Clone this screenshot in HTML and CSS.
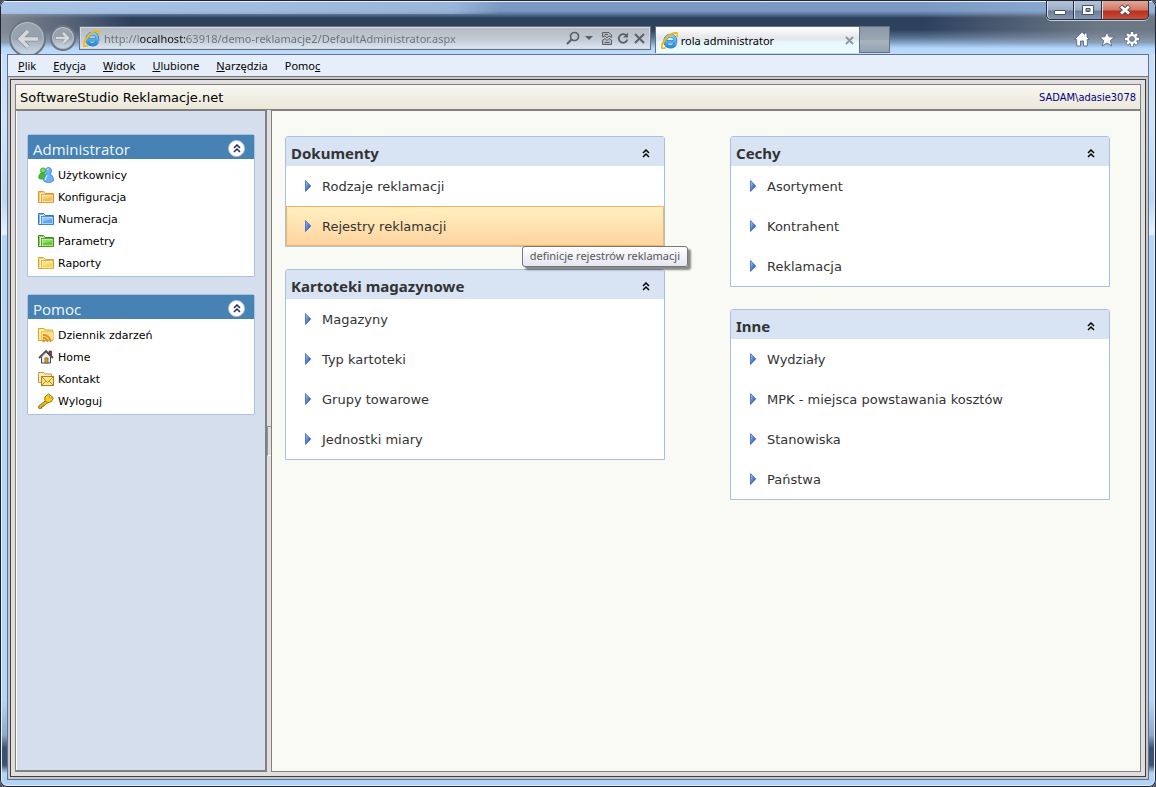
FILE: index.html
```
<!DOCTYPE html>
<html lang="pl">
<head>
	<meta charset="utf-8">
	<meta name="viewport" content="width=device-width, initial-scale=1.0">
	<link rel="stylesheet" href="styles.css">
	<title>rola administrator</title>
</head>
<body>
	<!-- shared icons -->
	<svg class="defs" width="0" height="0">
		<defs>
			<linearGradient id="blueGrad" x1="0" y1="0" x2="1" y2="1">
				<stop offset="0" stop-color="#a8d0fa"/>
				<stop offset="1" stop-color="#0430a8"/>
			</linearGradient>
			<linearGradient id="ieGrad" x1="0" y1="0" x2="0" y2="1">
				<stop offset="0" stop-color="#7cd0f6"/>
				<stop offset="1" stop-color="#2a90d6"/>
			</linearGradient>
		</defs>
		<symbol id="ie" viewBox="0 0 16 16">
			<path d="M4 9.2H13.6C13.8 5.6 11.8 3.4 8.9 3.4C6 3.4 3.8 5.6 3.8 8.6C3.8 11.8 6 13.8 8.9 13.8C11 13.8 12.6 12.8 13.4 11" fill="none" stroke="#2a7cc0" stroke-width="3.400"/>
			<path d="M4 9.2H13.6C13.8 5.6 11.8 3.4 8.9 3.4C6 3.4 3.8 5.6 3.8 8.6C3.8 11.8 6 13.8 8.9 13.8C11 13.8 12.6 12.8 13.4 11" fill="none" stroke="url(#ieGrad)" stroke-width="2.400"/>
			<path d="M14.8 4.6C15.8 2.4 15.6.8 13.8.8C11 .8 6.600 3.600 3.600 7.400C.8 11 -.2 14.200 1.200 15.200C2 15.600 3.200 15.300 4.400 14.600" fill="none" stroke="#f6b80c" stroke-width="1.800"/>
		</symbol>
		<symbol id="chevrons" viewBox="0 0 8 9">
			<path d="M1 4L4 1L7 4M1 8L4 5L7 8" fill="none" stroke="currentColor" stroke-width="1.500"/>
		</symbol>
		<symbol id="arrow" viewBox="0 0 6 12">
			<path d="M.5 .5L5.700 6L.5 11.500Z" fill="url(#blueGrad)" stroke="#2458c4" stroke-width=".7"/>
		</symbol>
		<symbol id="folder" viewBox="0 0 16 16">
			<path d="M.5 13.500V2.500H5.500L7 4.500H15.500V13.500Z" fill="#fff6dc" stroke="currentColor"/>
			<path d="M1.500 12.500V3.500H5L6.500 5.500" fill="none" stroke="var(--fill)" stroke-width=".8"/>
			<rect x="3.500" y="5.500" width="11.500" height="8" fill="#fff" stroke="currentColor" stroke-width=".8"/>
			<rect x="4.500" y="6.500" width="9.500" height="6" fill="var(--fill)"/>
			<path d="M4.500 6.500H14V8L4.500 10.500Z" fill="#fff" opacity=".3"/>
		</symbol>
	</svg>

	<div class="window">
		<header class="titlebar">
			<div class="win-buttons">
				<button class="win-btn" aria-label="Minimalizuj">
					<svg width="14" height="12" viewBox="0 0 14 12"><rect x="1.500" y="6.500" width="11" height="4" rx=".5" fill="#fff" stroke="#4b5262"/></svg>
				</button>
				<button class="win-btn" aria-label="Maksymalizuj">
					<svg width="12" height="12" viewBox="0 0 12 12"><path d="M.5 1.500H11.500V10.500H.5ZM4 4.500V7.500H8V4.500Z" fill="#fff" fill-rule="evenodd" stroke="#4b5262"/></svg>
				</button>
				<button class="win-btn close" aria-label="Zamknij">
					<svg width="14" height="12" viewBox="0 0 14 12"><path d="M2.500 2L11.500 10M11.500 2L2.500 10" stroke="#5b4652" stroke-width="4.500"/><path d="M3 2.400L11 9.600M11 2.400L3 9.600" stroke="#fff" stroke-width="2.700"/></svg>
				</button>
			</div>
			<div class="nav-row">
				<button class="round back" aria-label="Wstecz">
					<svg width="24" height="22" viewBox="0 0 24 22"><path d="M22 11H5M12 3L4 11L12 19" fill="none" stroke="#8a9199" stroke-width="5"/><path d="M22 11H5M12 3L4 11L12 19" fill="none" stroke="#d5dadf" stroke-width="3.400"/></svg>
				</button>
				<button class="round forward" aria-label="Dalej">
					<svg width="16" height="16" viewBox="0 0 16 16"><path d="M1 8H13M8 3L13 8L8 13" fill="none" stroke="#8a9199" stroke-width="4"/><path d="M1 8H13M8 3L13 8L8 13" fill="none" stroke="#d5dadf" stroke-width="2.500"/></svg>
				</button>
				<div class="address">
					<svg width="17" height="17"><use href="#ie"/></svg>
					<input type="text" aria-label="Adres" value="http://localhost:63918/demo-reklamacje2/DefaultAdministrator.aspx">
					<button aria-label="Szukaj"><svg width="14" height="14" viewBox="0 0 14 14"><circle cx="8.500" cy="5.500" r="4" fill="none" stroke="#5d6066" stroke-width="1.700"/><path d="M5.500 8.500L1 13" stroke="#5d6066" stroke-width="2.200"/></svg></button>
					<button aria-label="Lista adresów"><svg width="8" height="4" viewBox="0 0 8 4"><path d="M0 0H8L4 4Z" fill="#5d6066"/></svg></button>
					<button class="compat" aria-label="Widok zgodności"><svg width="10" height="13" viewBox="0 0 10 13"><path d="M.5 5V.5H7L9.500 3V5.500L7 4L5 6L3 4ZM.5 8L3 6.500L5 8.500L7 6.500L9.500 8V12.500H.5Z" fill="#b4b9c0" stroke="#5d6066"/><path d="M2.500 2.500H6M2.500 10.500H7.500" stroke="#5d6066"/></svg></button>
					<button aria-label="Odśwież"><svg width="12" height="13" viewBox="0 0 12 13"><path d="M9 3.200A4.300 4.300 0 1 0 10.300 7.500" fill="none" stroke="#5d6066" stroke-width="1.800"/><path d="M6 5.500H11V.5Z" fill="#5d6066"/></svg></button>
					<button aria-label="Zatrzymaj"><svg width="11" height="11" viewBox="0 0 11 11"><path d="M1 1L10 10M10 1L1 10" stroke="#5d6066" stroke-width="2"/></svg></button>
				</div>
				<div class="tab">
					<svg width="17" height="17"><use href="#ie"/></svg>
					<span>rola administrator</span>
					<button aria-label="Zamknij kartę"><svg width="9" height="9" viewBox="0 0 9 9"><path d="M1 1L8 8M8 1L1 8" stroke="#94979c" stroke-width="2"/></svg></button>
				</div>
				<button class="new-tab" aria-label="Nowa karta"></button>
				<div class="tools">
					<button aria-label="Strona główna"><svg width="16" height="16" viewBox="0 0 16 16"><path d="M8 1L.7 8.500H2.700V15H6.500V10H9.500V15H13.300V8.500H15.300L13 6V2H10.500V3.500Z" fill="#fff" stroke="#5c6980" stroke-width=".9"/></svg></button>
					<button aria-label="Ulubione"><svg width="16" height="16" viewBox="0 0 16 16"><path d="M8 .7L10.100 5.800L15.500 6.100L11.300 9.600L12.700 15L8 12L3.300 15L4.700 9.600L.5 6.100L5.900 5.800Z" fill="#fff" stroke="#5c6980" stroke-width=".9"/></svg></button>
					<button aria-label="Narzędzia"><svg width="16" height="16" viewBox="0 0 16 16"><g stroke="#5c6980" stroke-width="4"><path d="M8 .5V15.500M.5 8H15.500M2.700 2.700L13.300 13.300M13.300 2.700L2.700 13.300"/></g><circle cx="8" cy="8" r="5.700" fill="#5c6980"/><g stroke="#fff" stroke-width="2.400"><path d="M8 1V15M1 8H15M3.100 3.100L12.900 12.900M12.900 3.100L3.100 12.900"/></g><circle cx="8" cy="8" r="4.900" fill="#fff"/><circle cx="8" cy="8" r="2.500" fill="#8190a6" stroke="#5c6980" stroke-width=".7"/></svg></button>
				</div>
			</div>
		</header>

		<div class="client">
			<nav class="menu">
				<button><u>P</u>lik</button>
				<button><u>E</u>dycja</button>
				<button><u>W</u>idok</button>
				<button><u>U</u>lubione</button>
				<button><u>N</u>arzędzia</button>
				<button>Pomo<u>c</u></button>
			</nav>
			<div class="frame">
				<div class="page">
					<div class="page-head">
						<h1>SoftwareStudio Reklamacje.net</h1>
						<span class="user">SADAM\adasie3078</span>
					</div>
					<div class="panes">
						<aside class="sidebar">
							<section class="side-box">
								<div class="side-head">
									<h2>Administrator</h2>
									<button aria-label="Zwiń"><svg width="8" height="9"><use href="#chevrons"/></svg></button>
								</div>
								<ul>
									<li><a href="#"><svg width="16" height="16" viewBox="0 0 16 16"><circle cx="5" cy="3.500" r="2.600" fill="#7ade58" stroke="#2ca028" stroke-width=".8"/><path d="M.7 11C.7 7.500 2.500 5.500 5 5.500C7 5.500 8 7.500 8 12H2Z" fill="#3fbc38" stroke="#2ca028" stroke-width=".8"/><path d="M10.500 .6C8.300 .6 7.200 2.400 7.600 4.500C7.800 5.600 8.200 6.300 8.700 7C6.800 8 5.700 10.500 5.600 13.800C8 16 13 16 15.500 13.800C15.400 10.500 14.200 8 12.300 7C12.800 6.300 13.200 5.600 13.400 4.500C13.800 2.400 12.700 .6 10.500 .6Z" fill="#6ab2fa" stroke="#3c84d8" stroke-width=".9"/><path d="M9.200 3C9.400 2.300 10 2 10.800 2M9.300 8.500C8.300 9.500 7.500 11.200 7.300 13" stroke="#d6ecff" stroke-width="1.200" fill="none"/></svg>Użytkownicy</a></li>
									<li><a href="#"><svg class="orange" width="16" height="16"><use href="#folder"/></svg>Konfiguracja</a></li>
									<li><a href="#"><svg class="blue" width="16" height="16"><use href="#folder"/></svg>Numeracja</a></li>
									<li><a href="#"><svg class="green" width="16" height="16"><use href="#folder"/></svg>Parametry</a></li>
									<li><a href="#"><svg class="yellow" width="16" height="16"><use href="#folder"/></svg>Raporty</a></li>
								</ul>
							</section>
							<section class="side-box">
								<div class="side-head">
									<h2>Pomoc</h2>
									<button aria-label="Zwiń"><svg width="8" height="9"><use href="#chevrons"/></svg></button>
								</div>
								<ul>
									<li><a href="#"><svg width="16" height="16" viewBox="0 0 16 16"><path d="M.5 13.500V1.500H6L7 3H14.500V13.500Z" fill="#fbeaa8" stroke="#d8a428"/><path d="M3.500 13V4.500H15.500V13Z" fill="#fce28a" stroke="#e8bc48" stroke-width=".7"/><path d="M5 8A7 7 0 0 1 12.500 15M5 11A4 4 0 0 1 9.500 15" fill="none" stroke="#e08a24" stroke-width="1.800"/><circle cx="5.800" cy="14" r="1.200" fill="#e08a24"/></svg>Dziennik zdarzeń</a></li>
									<li><a href="#"><svg width="16" height="16" viewBox="0 0 16 16"><path d="M11 2H13.500V7H11Z" fill="#a03020" stroke="#58201c" stroke-width=".6"/><path d="M3.500 14V7.500L8 3L12.500 7.500V14Z" fill="#e9eef6" stroke="#3c4860"/><path d="M1 9L8 2L15 9" fill="none" stroke="#4c4c54" stroke-width="1.800"/><path d="M4 7.500L8 3.500" stroke="#d8b060" stroke-width="1"/><rect x="7" y="9" width="3" height="5" fill="#d8a030" stroke="#785010" stroke-width=".7"/></svg>Home</a></li>
									<li><a href="#"><svg width="16" height="16" viewBox="0 0 16 16"><path d="M.5 11.500V1.500H5.500L7 3H13.500V11.500Z" fill="#fbedb8" stroke="#b89a50"/><rect x="3.500" y="5.500" width="12" height="9" fill="#fce488" stroke="#b08020"/><path d="M4 6L9.500 11.500L15 6M4 14L8 10M15 14L11 10" fill="none" stroke="#b08020" stroke-width=".9"/></svg>Kontakt</a></li>
									<li><a href="#"><svg width="16" height="16" viewBox="0 0 16 16"><path d="M8.500 7L.8 13V15.300H3.500V13.800H5.200V12.300H6.800L10 9.300" fill="#f2c010" stroke="#7c5c08" stroke-width=".9"/><path d="M7 4L10.500 .8L15.400 4.800L13.500 8.500L9.500 9.800L6.700 7.200Z" fill="#fad018" stroke="#8c6808" stroke-width=".9"/><circle cx="12.300" cy="3.800" r="1.100" fill="#fff" stroke="#7c5c08" stroke-width=".6"/></svg>Wyloguj</a></li>
								</ul>
							</section>
						</aside>
						<div class="splitter"><button aria-label="Ukryj panel"></button></div>
						<main class="content">
							<div class="column">
								<section class="group">
									<div class="group-head">
										<h2>Dokumenty</h2>
										<button aria-label="Zwiń"><svg width="8" height="9"><use href="#chevrons"/></svg></button>
									</div>
									<ul>
										<li><a href="#"><svg width="6" height="12"><use href="#arrow"/></svg>Rodzaje reklamacji</a></li>
										<li class="hover"><a href="#"><svg width="6" height="12"><use href="#arrow"/></svg>Rejestry reklamacji</a><span class="tooltip" role="tooltip">definicje rejestrów reklamacji</span></li>
									</ul>
								</section>
								<section class="group">
									<div class="group-head">
										<h2>Kartoteki magazynowe</h2>
										<button aria-label="Zwiń"><svg width="8" height="9"><use href="#chevrons"/></svg></button>
									</div>
									<ul>
										<li><a href="#"><svg width="6" height="12"><use href="#arrow"/></svg>Magazyny</a></li>
										<li><a href="#"><svg width="6" height="12"><use href="#arrow"/></svg>Typ kartoteki</a></li>
										<li><a href="#"><svg width="6" height="12"><use href="#arrow"/></svg>Grupy towarowe</a></li>
										<li><a href="#"><svg width="6" height="12"><use href="#arrow"/></svg>Jednostki miary</a></li>
									</ul>
								</section>
							</div>
							<div class="column">
								<section class="group">
									<div class="group-head">
										<h2>Cechy</h2>
										<button aria-label="Zwiń"><svg width="8" height="9"><use href="#chevrons"/></svg></button>
									</div>
									<ul>
										<li><a href="#"><svg width="6" height="12"><use href="#arrow"/></svg>Asortyment</a></li>
										<li><a href="#"><svg width="6" height="12"><use href="#arrow"/></svg>Kontrahent</a></li>
										<li><a href="#"><svg width="6" height="12"><use href="#arrow"/></svg>Reklamacja</a></li>
									</ul>
								</section>
								<section class="group">
									<div class="group-head">
										<h2>Inne</h2>
										<button aria-label="Zwiń"><svg width="8" height="9"><use href="#chevrons"/></svg></button>
									</div>
									<ul>
										<li><a href="#"><svg width="6" height="12"><use href="#arrow"/></svg>Wydziały</a></li>
										<li><a href="#"><svg width="6" height="12"><use href="#arrow"/></svg>MPK - miejsca powstawania kosztów</a></li>
										<li><a href="#"><svg width="6" height="12"><use href="#arrow"/></svg>Stanowiska</a></li>
										<li><a href="#"><svg width="6" height="12"><use href="#arrow"/></svg>Państwa</a></li>
									</ul>
								</section>
							</div>
						</main>
					</div>
				</div>
			</div>
		</div>
	</div>
</body>
</html>
```
FILE: styles.css
```
* {
	box-sizing: border-box;
}
body {
	margin: 0;
	background-color: #4a5260;
	font-family: Verdana, "DejaVu Sans", sans-serif;
	font-size: 13px;
	color: #000;
}
h1, h2, ul {
	margin: 0;
	padding: 0;
	font-weight: normal;
}
ul {
	list-style: none;
}
a {
	color: inherit;
	text-decoration: none;
}
button {
	padding: 0;
	border: none;
	background: none;
	color: inherit;
	font: inherit;
}
button, .address, .tab, a {
	display: flex;
	align-items: center;
}
button {
	justify-content: center;
}
svg {
	flex: none;
}
.defs {
	position: absolute;
}

/* window frame */
.window {
	display: flex;
	flex-direction: column;
	min-height: 100vh;
	padding: 0 7px 7px;
	border-radius: 7px;
	background: linear-gradient(#b9d8fa 0, #cfe4fb 120px, #bdd7f3 200px, #e8f2fd 234px, #b4d6fb 236px, #b4d6fb 700px, #8fa9c8 735px, #3c5270 748px, #3c5270 765px, #b0d3f9 773px);
	box-shadow: inset 0 0 0 1px #1f2430, inset 0 0 0 2px #e4f0fc;
}
.titlebar {
	height: 54px;
	margin: 0 -6px;
	padding: 1px 6px 0;
	border-radius: 7px 7px 0 0;
	background:
		linear-gradient(90deg, rgba(150, 155, 160, .8), rgba(150, 155, 160, 0) 130px, rgba(150, 155, 160, 0) 80%, rgba(150, 155, 160, .6) 95%) 0 14px / 100% 28px no-repeat,
		linear-gradient(#20242c 0, #20242c 1px, #e6effa 1px, #e6effa 2px, rgba(0, 0, 0, 0) 2px),
		linear-gradient(90deg, rgba(190, 215, 245, .7), rgba(190, 215, 245, .45) 450px, rgba(190, 215, 245, 0) 500px, rgba(190, 215, 245, 0) 80%, rgba(190, 215, 245, .4)) 0 0 / 100% 14px no-repeat,
		linear-gradient(#7c9cc8 2px, #7898c0 11px, #5c789c 14px, #2c405c 18px, #2f435f 30px, #5a7496 38px, #b4d6fb 48px, #c0dcfb 54px);
}
.win-buttons {
	display: flex;
	justify-content: flex-end;
	height: 19px;
}
.win-btn {
	width: 28px;
	border: 1px solid #29303c;
	border-top: none;
	border-left: none;
	background: linear-gradient(#b4c4da, #9dadc4 9px, #6c7e98 10px, #8395b0);
	box-shadow: inset 1px 0 0 #d3deed, 0 1px 0 #c2cedd;
}
.win-btn:first-child {
	border-left: 1px solid #29303c;
	border-radius: 0 0 0 5px;
}
.win-btn.close {
	width: 47px;
	border-radius: 0 0 5px 0;
	background: linear-gradient(#e2a896, #d27868 9px, #b5301c 10px, #c8503c);
}
.nav-row {
	display: flex;
	align-items: flex-start;
	height: 34px;
	padding: 6px 9px 0 2px;
	font-family: "Noto Sans", sans-serif;
	font-size: 11px;
}
.round {
	flex: none;
	border: 2px solid #6d757f;
	border-radius: 50%;
	background: linear-gradient(#98a2ae, #98a2ae 50%, #a9b4c0 60%, #cbdcee);
	box-shadow: inset 0 0 0 1px #b8c1cb;
}
.back {
	width: 37px;
	height: 37px;
	margin: -6px 4px 0 0;
}
.forward {
	width: 26px;
	height: 26px;
	margin: -1px 3px 0 0;
}
.address {
	flex: 574;
	height: 24px;
	margin-right: 4px;
	padding: 0 5px 0 3px;
	border: 1px solid #66707e;
	background: linear-gradient(#b4b9c3, #c5ccd6 60%, #dce8f4);
	box-shadow: inset 0 0 0 1px #d5dbe4;
}
.address input {
	flex: 1;
	min-width: 0;
	margin-left: 4px;
	padding: 0;
	border: none;
	outline: none;
	/* host name is darker than the rest of the address */
	background: linear-gradient(90deg, #6c7077 35px, #111 35px, #111 83px, #6c7077 83px);
	-webkit-background-clip: text;
	background-clip: text;
	color: transparent;
	font: inherit;
}
.address button {
	margin-left: 5px;
}
.address .compat {
	margin-left: 9px;
}
.tab {
	flex: 198;
	height: 27px;
	padding: 0 5px;
	border: 1px solid #66707e;
	border-bottom: none;
	background: linear-gradient(#fff, #e3e5ea 45%, #e9f8fc 60%, #ecfbff);
}
.tab span {
	flex: 1;
	margin-left: 3px;
}
.new-tab {
	flex: none;
	width: 30px;
	height: 27px;
	border: 1px solid #66707e;
	border-left: none;
	background: linear-gradient(#8c98a8, #9aa7b3 50%, #a9b4bc 55%, #93a2b4);
}
.tools {
	display: flex;
	flex: 255;
	justify-content: flex-end;
	gap: 9px;
	padding-top: 5px;
}
/* padding is left out of the flex shares */
.address, .tab, .tools {
	flex-basis: 0;
	min-width: 0;
}

/* browser client area */
.client {
	display: flex;
	flex: 1;
	flex-direction: column;
	border: 1px solid #5f7390;
	background-color: #e6eefa;
}
.menu {
	display: flex;
	gap: 17px;
	height: 21px;
	padding-left: 10px;
	font-family: "Noto Sans", sans-serif;
	font-size: 11px;
}
.frame {
	display: flex;
	flex: 1;
	padding: 2px;
	border-top: 1px solid #777;
	background-color: #c8c6c6;
}
.page {
	display: flex;
	flex: 1;
	flex-direction: column;
	padding: 4px;
	border: 1px solid #404040;
	background-color: #e0dede;
}
.page-head {
	display: flex;
	align-items: center;
	justify-content: space-between;
	height: 26px;
	padding: 0 4px;
	border: 1px solid #808080;
	background: linear-gradient(#f8f7f1, #ebe8d9);
}
.page-head h1 {
	font-size: 13px;
}
.user {
	color: #000080;
	font-family: Tahoma, "DejaVu Sans Condensed", sans-serif;
	font-size: 11px;
}
.panes {
	display: flex;
	flex: 1;
}
.sidebar {
	width: 252px;
	padding: 23px 10px 0 11px;
	border: 1px solid #808080;
	border-width: 1px 2px 2px 1px;
	background-color: #d5deed;
	box-shadow: inset 1px 0 0 #fff;
}
.side-box {
	margin-bottom: 17px;
	border: 1px solid #a9c1de;
	border-radius: 3px 3px 0 0;
	background-color: #fff;
}
.side-head {
	display: flex;
	align-items: center;
	justify-content: space-between;
	height: 24px;
	padding: 0 9px 0 5px;
	background-color: #4682b4;
	color: #f3f8fc;
}
.side-head h2 {
	padding-top: 4px;
	font-family: "Segoe UI", "Open Sans", sans-serif;
	font-size: 15px;
	line-height: 20px;
}
.side-head button {
	width: 17px;
	height: 17px;
	margin-top: 2px;
	border: 1px solid #b8c0d0;
	border-radius: 50%;
	background-color: #fff;
	color: #202860;
}
.side-box ul {
	padding: 5px 10px 2px;
	font-size: 11px;
}
.side-box a {
	gap: 4px;
	height: 22px;
}
.orange {
	color: #f09020;
	--fill: #f0c050;
}
.blue {
	color: #2c78d8;
	--fill: #5aa8f4;
}
.green {
	color: #389020;
	--fill: #68cc28;
}
.yellow {
	color: #d8a038;
	--fill: #f4d848;
}
.splitter {
	display: flex;
	align-items: center;
	width: 4px;
}
.splitter button {
	width: 4px;
	height: 30px;
	border: 1px solid #909090;
	border-width: 1px 0 0 1px;
	border-bottom: 1px solid #fff;
}

/* groups of links */
.content {
	display: grid;
	flex: 1;
	grid-template-columns: 1fr 1fr;
	column-gap: 65px;
	padding: 25px 30px 20px 13px;
	border: 1px solid #808080;
	background-color: #f9faf4;
}
.group {
	margin-bottom: 22px;
	border: 1px solid #a9c1de;
	border-radius: 3px 3px 0 0;
	background-color: #fff;
	color: #333;
}
.group-head {
	display: flex;
	align-items: center;
	justify-content: space-between;
	height: 29px;
	padding: 4px 14px 0 5px;
	background-color: #d8e3f3;
}
.group-head h2 {
	padding-bottom: 2px;
	font-family: "Noto Sans", sans-serif;
	font-size: 15px;
	font-weight: bold;
	line-height: 20px;
}
.group-head button {
	color: #000;
}
.group li {
	position: relative;
	height: 40px;
	border: 1px solid transparent;
}
.group li a {
	gap: 11px;
	height: 38px;
	padding-left: 18px;
}
.group .hover {
	border-color: #fbb45c;
	background: linear-gradient(#fff0c0, #ffd4a0);
}
.tooltip {
	position: absolute;
	z-index: 1;
	right: -25px;
	top: 39px;
	height: 21px;
	padding: 0 7px;
	border: 1px solid #767676;
	border-radius: 3px;
	background: linear-gradient(#fff, #e4e5f0);
	box-shadow: 3px 3px 2px rgba(0, 0, 0, .45);
	color: #575757;
	font-family: "Noto Sans", sans-serif;
	font-size: 11px;
	line-height: 18px;
	white-space: nowrap;
}
```
